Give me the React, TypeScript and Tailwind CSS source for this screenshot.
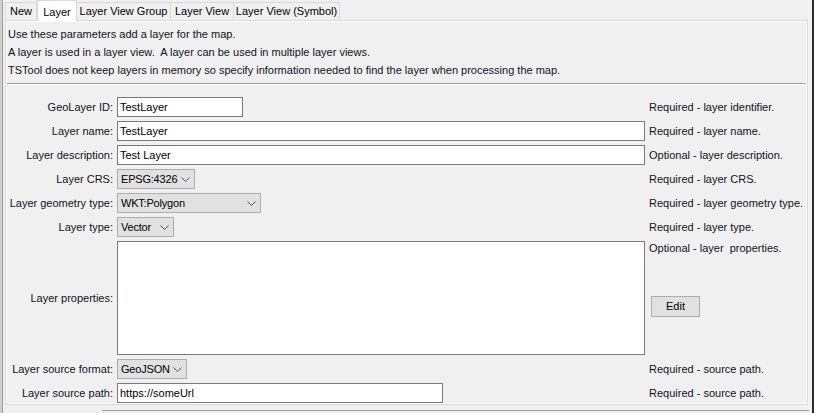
import React from "react";

// Swing-style "Layer" tab of the TSTool map command editor.

const FONT = { fontFamily: '"Liberation Sans", Arial, sans-serif' };

const TABS = [
  { label: "New", width: "w-[32px]" },
  { label: "Layer", width: "w-[40px]", selected: true },
  { label: "Layer View Group", width: "w-[94px]" },
  { label: "Layer View", width: "w-[63px]" },
  { label: "Layer View (Symbol)", width: "w-[106px]" },
];

const Chevron = () => (
  <svg width="9" height="5" viewBox="0 0 9 5" className="shrink-0 ml-auto">
    <path d="M0.5 0.5 L4.5 4.5 L8.5 0.5" fill="none" stroke="#555" strokeWidth="1" />
  </svg>
);

const TextField = ({ value, width }: { value: string; width: string }) => (
  <div
    className={`${width} h-[20px] bg-white border border-[#7a7a7a] pl-[2px] flex items-center text-[11px] text-black leading-none whitespace-nowrap`}
  >
    {value}
  </div>
);

const Combo = ({ value, width }: { value: string; width: string }) => (
  <div
    className={`${width} h-[20px] bg-[#e1e1e1] border border-[#adadad] pl-[3px] pr-[4px] flex items-center gap-[3px] text-[11px] text-black leading-none whitespace-nowrap`}
  >
    <span className="tracking-[-0.2px]">{value}</span>
    <Chevron />
  </div>
);

const Label = ({ children }: { children: React.ReactNode }) => (
  <div className="h-full flex items-center justify-end text-[11px] text-[#111122] whitespace-nowrap">
    {children}
  </div>
);

const Note = ({ children }: { children: React.ReactNode }) => (
  <div className="h-[20px] flex items-center text-[11px] text-[#111122] whitespace-nowrap">
    {children}
  </div>
);

export default function App() {
  return (
    <div className="w-[814px] h-[413px] bg-[#f0f0f0] flex overflow-hidden" style={FONT}>
      {/* edge of the window behind */}
      <div className="w-[3px] h-full bg-[#cfcfcf] border-r border-[#9c9c9c]" />

      <div className="flex-1 flex flex-col">
        {/* tab strip */}
        <div className="h-[20px] flex items-end pl-[2px]">
          {TABS.map((t) =>
            t.selected ? (
              <div
                key={t.label}
                className={`${t.width} h-[21px] -mb-[1px] relative z-10 bg-white border border-b-0 border-[#d9d9d9] flex items-start justify-center pt-[3px] text-[11px] text-black whitespace-nowrap`}
              >
                {t.label}
              </div>
            ) : (
              <div
                key={t.label}
                className={`${t.width} h-[18px] bg-[#f0f0f0] border border-b-0 border-l-0 first:border-l border-[#d9d9d9] flex items-center justify-center text-[11px] text-black whitespace-nowrap`}
              >
                {t.label}
              </div>
            )
          )}
        </div>

        {/* tab content */}
        <div className="ml-[2px] w-[803px] h-[385px] border border-[#d9d9d9]">
          <div className="h-full border border-white flex flex-col">
            <div className="pt-[3px] pb-[4px] pl-[1px] text-[11px] leading-[18px] text-[#111122]">
              <div>Use these parameters add a layer for the map.</div>
              <div>A layer is used in a layer view.&nbsp; A layer can be used in multiple layer views.</div>
              <div>TSTool does not keep layers in memory so specify information needed to find the layer when processing the map.</div>
            </div>
            <div className="h-[1px] bg-[#a0a0a0]" />
            <div className="h-[1px] bg-white" />

            <div className="pt-[12px] grid grid-cols-[106px_528px_1fr] grid-rows-[repeat(6,20px)_114px_20px_20px] gap-x-[4px] gap-y-[4px]">
              <Label>GeoLayer ID:</Label>
              <TextField value="TestLayer" width="w-[126px]" />
              <Note>Required - layer identifier.</Note>

              <Label>Layer name:</Label>
              <TextField value="TestLayer" width="w-[528px]" />
              <Note>Required - layer name.</Note>

              <Label>Layer description:</Label>
              <TextField value="Test Layer" width="w-[528px]" />
              <Note>Optional - layer description.</Note>

              <Label>Layer CRS:</Label>
              <Combo value="EPSG:4326" width="w-[78px]" />
              <Note>Required - layer CRS.</Note>

              <Label>Layer geometry type:</Label>
              <Combo value="WKT:Polygon" width="w-[144px]" />
              <Note>Required - layer geometry type.</Note>

              <Label>Layer type:</Label>
              <Combo value="Vector" width="w-[57px]" />
              <Note>Required - layer type.</Note>

              <Label>Layer properties:</Label>
              <div className="h-[114px] w-[528px] bg-white border border-[#7a7a7a]" />
              <div className="flex flex-col">
                <div className="h-[14px] flex items-center text-[11px] text-[#111122] whitespace-nowrap">
                  Optional - layer&nbsp; properties.
                </div>
                <button className="mt-[41px] ml-[2px] w-[49px] h-[21px] bg-[#e1e1e1] border border-[#adadad] text-[11px] text-black flex items-center justify-center">
                  Edit
                </button>
              </div>

              <Label>Layer source format:</Label>
              <Combo value="GeoJSON" width="w-[70px]" />
              <Note>Required - source path.</Note>

              <Label>Layer source path:</Label>
              <TextField value="https://someUrl" width="w-[326px]" />
              <Note>Required - source path.</Note>
            </div>
          </div>
        </div>

        {/* top edge of the button panel below */}
        <div className="mt-[5px] ml-[99px] w-[707px] h-[1px] bg-[#a0a0a0]" />
      </div>

      {/* window behind on the right */}
      <div className="w-[2px] h-full bg-[#2b2b2b]" />
    </div>
  );
}
